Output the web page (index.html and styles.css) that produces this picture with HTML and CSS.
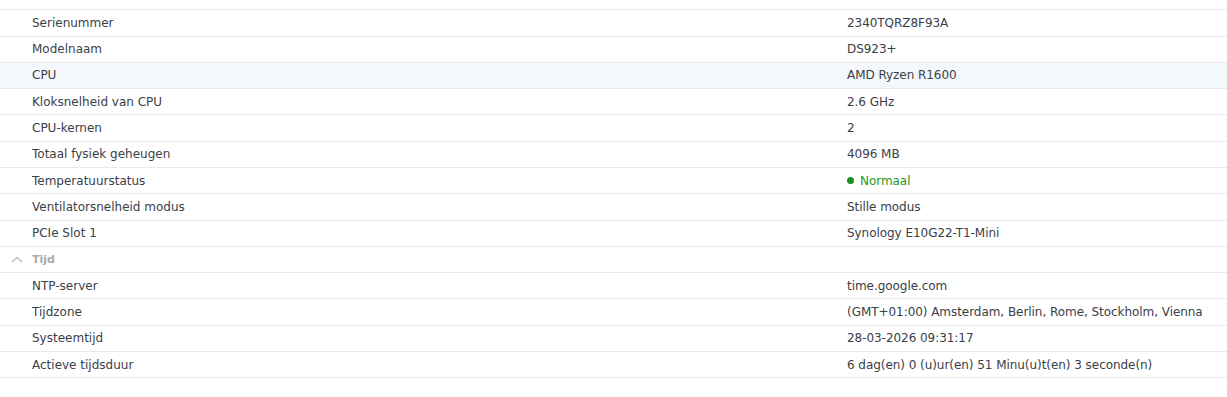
FILE: index.html
```html
<!DOCTYPE html>
<html lang="nl">
<head>
<meta charset="utf-8">
<title>Info</title>
<link rel="stylesheet" href="styles.css">
</head>
<body>
<div class="list">
  <div class="row section"><span class="label"><svg class="chev" width="12" height="7" viewBox="0 0 12 7"><path d="M1 6 L6 1.5 L11 6" fill="none" stroke="#b5b9bd" stroke-width="1.3"/></svg>Hardware</span></div>
  <div class="row"><span class="label">Serienummer</span><span class="value">2340TQRZ8F93A</span></div>
  <div class="row"><span class="label">Modelnaam</span><span class="value">DS923+</span></div>
  <div class="row hover"><span class="label">CPU</span><span class="value">AMD Ryzen R1600</span></div>
  <div class="row"><span class="label">Kloksnelheid van CPU</span><span class="value">2.6 GHz</span></div>
  <div class="row"><span class="label">CPU-kernen</span><span class="value">2</span></div>
  <div class="row"><span class="label">Totaal fysiek geheugen</span><span class="value">4096 MB</span></div>
  <div class="row"><span class="label">Temperatuurstatus</span><span class="value ok"><span class="dot"></span>Normaal</span></div>
  <div class="row"><span class="label">Ventilatorsnelheid modus</span><span class="value">Stille modus</span></div>
  <div class="row"><span class="label">PCIe Slot 1</span><span class="value">Synology E10G22-T1-Mini</span></div>
  <div class="row section"><span class="label"><svg class="chev" width="12" height="7" viewBox="0 0 12 7"><path d="M1 6 L6 1.5 L11 6" fill="none" stroke="#b5b9bd" stroke-width="1.3"/></svg>Tijd</span></div>
  <div class="row"><span class="label">NTP-server</span><span class="value">time.google.com</span></div>
  <div class="row"><span class="label">Tijdzone</span><span class="value">(GMT+01:00) Amsterdam, Berlin, Rome, Stockholm, Vienna</span></div>
  <div class="row"><span class="label">Systeemtijd</span><span class="value">28-03-2026 09:31:17</span></div>
  <div class="row"><span class="label">Actieve tijdsduur</span><span class="value">6 dag(en) 0 (u)ur(en) 51 Minu(u)t(en) 3 seconde(n)</span></div>
</div>
</body>
</html>
```
FILE: styles.css
```css
html, body {
  margin: 0;
  padding: 0;
  background: #ffffff;
}
body {
  font-family: "DejaVu Sans", Verdana, sans-serif;
  font-size: 12px;
  color: #3a4048;
  overflow: hidden;
}
.list {
  margin-top: -16px;
}
.row {
  display: grid;
  grid-template-columns: 847px 1fr;
  align-items: center;
  height: 26.29px;
  box-sizing: border-box;
  border-bottom: 1px solid #e8eaec;
}
.row.hover {
  background: #f4f8fc;
}
.label {
  padding-left: 32px;
  position: relative;
  white-space: nowrap;
}
.value {
  white-space: nowrap;
  letter-spacing: -0.05px;
}
.section .label {
  font-weight: bold;
  color: #a6abb0;
  font-size: 11px;
}
.chev {
  position: absolute;
  left: 11px;
  top: 3px;
}
.ok {
  color: #1e9a24;
  display: flex;
  align-items: center;
}
.dot {
  width: 7px;
  height: 7px;
  border-radius: 50%;
  background: #1a8f1e;
  margin-right: 6px;
}
```
